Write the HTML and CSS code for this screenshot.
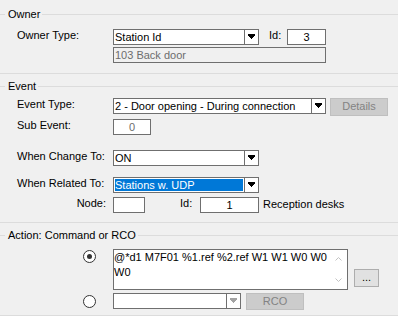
FILE: index.html
```html
<!DOCTYPE html>
<html lang="en">
<head>
    <meta charset="UTF-8">
    <meta name="viewport" content="width=device-width, initial-scale=1.0">
    <title>Action</title>
    <link rel="stylesheet" href="styles.css">
</head>
<body>

    <div class="form">
        <!-- Owner -->
        <div class="group owner">
            <div class="group-title"><span>Owner</span></div>
            <div class="row r-owner">
                <div class="label">Owner Type:</div>
                <div class="combo w146">
                    <div class="value">Station Id</div>
                    <div class="arrow"><svg width="7" height="5" shape-rendering="crispEdges"><rect x="0" y="0" width="7" height="2"/><rect x="1" y="2" width="5" height="1"/><rect x="2" y="3" width="3" height="1"/><rect x="3" y="4" width="1" height="1"/></svg></div>
                </div>
                <div class="label-id">Id:</div>
                <div class="field center w39">3</div>
            </div>
            <div class="row r-name">
                <div class="label"></div>
                <div class="field disabled w213">103 Back door</div>
            </div>
        </div>

        <!-- Event -->
        <div class="group event">
            <div class="group-title"><span>Event</span></div>
            <div class="row r-type">
                <div class="label">Event Type:</div>
                <div class="combo w213">
                    <div class="value">2 - Door opening - During connection</div>
                    <div class="arrow"><svg width="7" height="5" shape-rendering="crispEdges"><rect x="0" y="0" width="7" height="2"/><rect x="1" y="2" width="5" height="1"/><rect x="2" y="3" width="3" height="1"/><rect x="3" y="4" width="1" height="1"/></svg></div>
                </div>
                <div class="btn disabled btn-details">Details</div>
            </div>
            <div class="row r-sub">
                <div class="label">Sub Event:</div>
                <div class="field center grey w38">0</div>
            </div>
            <div class="row r-change">
                <div class="label">When Change To:</div>
                <div class="combo w146">
                    <div class="value">ON</div>
                    <div class="arrow"><svg width="7" height="5" shape-rendering="crispEdges"><rect x="0" y="0" width="7" height="2"/><rect x="1" y="2" width="5" height="1"/><rect x="2" y="3" width="3" height="1"/><rect x="3" y="4" width="1" height="1"/></svg></div>
                </div>
            </div>
            <div class="row r-related">
                <div class="label">When Related To:</div>
                <div class="combo w146">
                    <div class="value selected">Stations w. UDP</div>
                    <div class="arrow"><svg width="7" height="5" shape-rendering="crispEdges"><rect x="0" y="0" width="7" height="2"/><rect x="1" y="2" width="5" height="1"/><rect x="2" y="3" width="3" height="1"/><rect x="3" y="4" width="1" height="1"/></svg></div>
                </div>
            </div>
            <div class="row r-node">
                <div class="label right">Node:</div>
                <div class="field w32"></div>
                <div class="label-id node-id">Id:</div>
                <div class="field center w59">1</div>
                <div class="note">Reception desks</div>
            </div>
        </div>

        <!-- Action -->
        <div class="group action">
            <div class="group-title"><span>Action: Command or RCO</span></div>
            <div class="row r-cmd">
                <div class="radio-cell"><span class="radio checked"></span></div>
                <div class="memo">
                    <div class="memo-text">@*d1 M7F01 %1.ref %2.ref W1 W1 W0 W0<br>W0</div>
                    <div class="scroll">
                        <svg width="7" height="4"><polyline points="0.5,3.5 3.5,0.5 6.5,3.5" fill="none" stroke="#c2c2c2" stroke-width="1"/></svg>
                        <svg width="7" height="4"><polyline points="0.5,0.5 3.5,3.5 6.5,0.5" fill="none" stroke="#c2c2c2" stroke-width="1"/></svg>
                    </div>
                </div>
                <div class="btn btn-more">...</div>
            </div>
            <div class="row r-rco">
                <div class="radio-cell"><span class="radio"></span></div>
                <div class="combo off w128">
                    <div class="value"></div>
                    <div class="arrow"><svg width="7" height="5" shape-rendering="crispEdges"><rect x="0" y="0" width="7" height="2"/><rect x="1" y="2" width="5" height="1"/><rect x="2" y="3" width="3" height="1"/><rect x="3" y="4" width="1" height="1"/></svg></div>
                </div>
                <div class="btn disabled btn-rco">RCO</div>
            </div>
        </div>
    </div>

</body>
</html>
```

FILE: styles.css
```css
body{
    margin: 0;
    padding: 0;
    background: #f0f0f0;
    font-family: "Liberation Sans", Arial, sans-serif;
    font-size: 11px;
    color: #000;
}
.form{
    width: 398px;
    height: 316px;
    overflow: hidden;
}

/* group box: only the top and bottom lines are visible */
.group{
    border-bottom: 1px solid #dcdcdc;
}
.group-title{
    display: flex;
    align-items: center;
    height: 13px;
    line-height: 13px;
    margin-top: 6px;
    white-space: nowrap;
}
.group-title::before{
    content: "";
    width: 5px;
    height: 1px;
    margin-right: 3px;
    background: #dcdcdc;
}
.group-title::after{
    content: "";
    flex: 1;
    height: 1px;
    margin-left: 2px;
    background: #dcdcdc;
}
.owner{
    padding-bottom: 10px;
}
.owner .group-title{
    margin-top: 8px;
}
.event{
    padding-bottom: 9px;
}
.action{
    padding-bottom: 5px;
}

/* rows */
.row{
    display: flex;
    align-items: flex-start;
    padding-left: 17px;
}
.r-owner{ margin-top: 8px; }
.r-name{ margin-top: 2px; }
.r-type{ margin-top: 5px; }
.r-sub{ margin-top: 3px; }
.r-change{ margin-top: 15px; }
.r-related{ margin-top: 11px; }
.r-node{ margin-top: 4px; }
.r-cmd{ margin-top: 7px; }
.r-rco{ margin-top: 3px; }

.label{
    width: 96px;
    flex: none;
    line-height: 12px;
    white-space: nowrap;
}
.label.right{
    text-align: right;
    padding-right: 7px;
    box-sizing: border-box;
}
.label-id{
    width: 18px;
    margin-left: 10px;
    line-height: 12px;
}
.node-id{
    width: 20px;
    margin-left: 35px;
}
.note{
    margin-left: 4px;
    line-height: 12px;
    padding-top: 1px;
    white-space: nowrap;
}

/* text boxes and combos */
.field,
.combo{
    height: 16px;
    box-sizing: border-box;
    border: 1px solid #6f6f6f;
    background: #fff;
    flex: none;
}
.field{
    padding: 1px 0 0 1px;
    line-height: 12px;
    white-space: nowrap;
    overflow: hidden;
}
.field.center{
    text-align: center;
    padding-left: 0;
}
.field.disabled{
    background: #f0f0f0;
    color: #6d6d6d;
}
.field.grey{
    color: #6d6d6d;
}
.combo{
    display: flex;
}
.combo .value{
    flex: 1;
    padding: 1px 0 0 1px;
    line-height: 12px;
    white-space: nowrap;
    overflow: hidden;
}
.combo .value.selected{
    margin: 1px;
    padding: 0;
    background: #0078d7;
    color: #fff;
}
.combo .arrow{
    width: 14px;
    border-left: 1px solid #6f6f6f;
    display: flex;
    align-items: center;
    justify-content: center;
    padding-bottom: 2px;
    box-sizing: border-box;
}
.combo .arrow svg{
    fill: #000;
}
.combo.off .arrow svg{
    fill: #a3a3a3;
}
.w32{ width: 32px; }
.w38{ width: 38px; }
.w39{ width: 39px; }
.w59{ width: 59px; }
.w128{ width: 128px; }
.w146{ width: 146px; }
.w213{ width: 213px; }

/* buttons */
.btn{
    box-sizing: border-box;
    height: 18px;
    border: 1px solid #adadad;
    background: #e1e1e1;
    text-align: center;
    line-height: 15px;
    flex: none;
}
.btn.disabled{
    background: #cccccc;
    border-color: #bfbfbf;
    color: #838383;
}
.btn-details{
    width: 58px;
    margin-left: 4px;
}
.btn-more{
    width: 25px;
    margin-left: 6px;
    margin-top: 20px;
}
.btn-rco{
    width: 58px;
    height: 17px;
    margin-left: 5px;
    line-height: 14px;
}

/* radios */
.radio-cell{
    width: 96px;
    flex: none;
    padding-left: 66px;
    box-sizing: border-box;
}
.radio{
    display: flex;
    align-items: center;
    justify-content: center;
    width: 13px;
    height: 13px;
    box-sizing: border-box;
    border: 1px solid #333;
    border-radius: 50%;
    background: #fff;
    margin-top: 2px;
}
.r-cmd .radio{
    margin-top: 1px;
}
.radio.checked::after{
    content: "";
    width: 5px;
    height: 5px;
    border-radius: 50%;
    background: #333;
}

/* command memo */
.memo{
    width: 235px;
    height: 41px;
    box-sizing: border-box;
    border: 1px solid #6f6f6f;
    background: #fff;
    display: flex;
    flex: none;
}
.memo-text{
    flex: 1;
    line-height: 15px;
    white-space: nowrap;
    overflow: hidden;
}
.scroll{
    width: 17px;
    display: flex;
    flex-direction: column;
    justify-content: space-between;
    align-items: center;
    padding: 7px 0;
    box-sizing: border-box;
}
.scroll svg{
    display: block;
}
```
